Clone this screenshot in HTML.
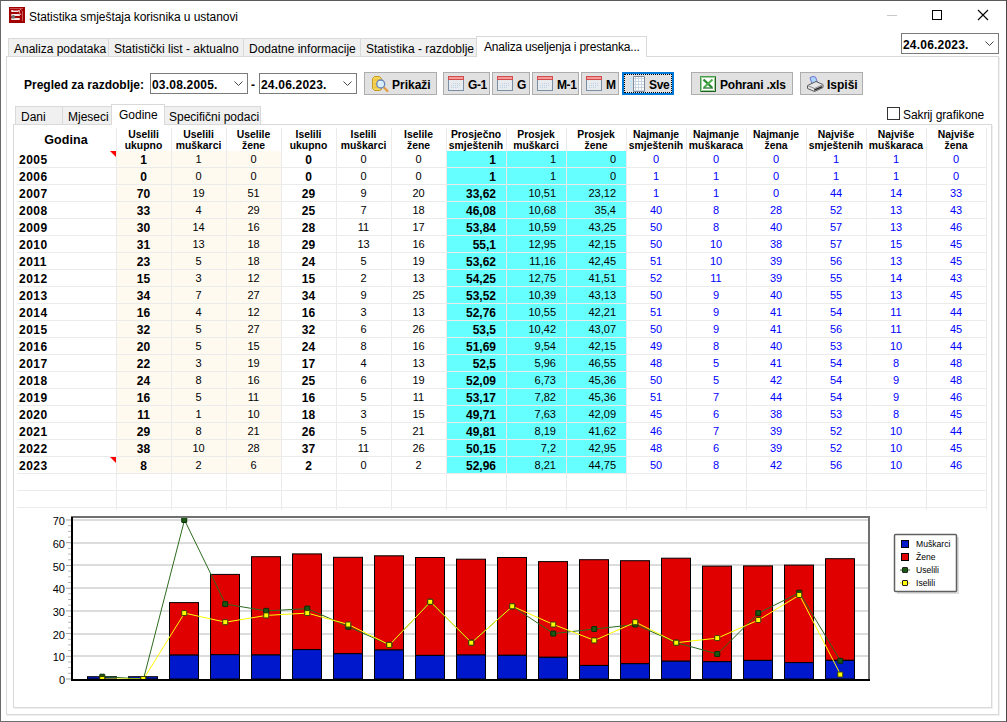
<!DOCTYPE html>
<html><head><meta charset="utf-8">
<style>
*{box-sizing:border-box;margin:0;padding:0}
html,body{width:1007px;height:722px;overflow:hidden;background:#6e6e6e;font-family:"Liberation Sans",sans-serif;color:#000}
.abs{position:absolute}
#win{position:absolute;left:0;top:0;width:1006px;height:721px;background:#fff;border-left:1px solid #6a6a6a;border-top:1px solid #5a5a5a}
#rb{position:absolute;left:1006px;top:0;width:1px;height:722px;background:#4a4646}
.title{position:absolute;left:29px;top:9px;font-size:12px;line-height:16px;white-space:nowrap;letter-spacing:-0.06px}
.tab{position:absolute;height:18px;background:#f0f0f0;border:1px solid #d9d9d9;border-bottom:none;font-size:12px;line-height:16px;white-space:nowrap;padding-left:5px;padding-top:2px}
.tab.act{background:#fff;z-index:2}
.panel{position:absolute;border:1px solid #d9d9d9;background:#fff;box-shadow:1px 1px 0 #f0f0f0}
.combo{position:absolute;width:98px;height:21px;border:1px solid #7a7a7a;background:#fff;font-size:12px;font-weight:bold;line-height:19px;padding-left:1px;padding-top:2px;white-space:nowrap;overflow:hidden;letter-spacing:0.2px}
.chev{position:absolute;right:4px;top:7px;width:9px;height:6px;overflow:visible}
.btn{position:absolute;top:72px;height:23px;background:#e1e1e1;border:1px solid #adadad;font-size:12px;font-weight:bold;line-height:21px;white-space:nowrap}
.btn svg{position:absolute}
.btn span{position:absolute;top:2px}
/* grid */
.bg{position:absolute}
.cr{background:#fffaf0}
.cy{background:#66ffff}
.hl{position:absolute;left:17px;width:969px;height:1px;background:#ebebeb}
.vl{position:absolute;top:128px;height:382px;width:1px;background:#ebebeb}
.hd0{position:absolute;left:16px;top:129px;width:100px;height:22px;text-align:center;font-weight:bold;font-size:12.5px;line-height:22px;letter-spacing:0.1px}
.hd{position:absolute;top:130px;height:22px;text-align:center;font-weight:bold;font-size:10.4px;line-height:10.5px;white-space:nowrap}
.t{position:absolute;height:17px;line-height:18px;white-space:nowrap}
.yr{font-weight:bold;font-size:12px;padding-left:3px;padding-top:1px;letter-spacing:0.5px}
.cb{font-weight:bold;font-size:12px;text-align:center;padding-top:1px}
.cn{font-size:11px;text-align:center}
.rb{font-weight:bold;font-size:12px;text-align:right;padding-right:10px;padding-top:1px}
.rn{font-size:11px;text-align:right;padding-right:10px}
.bl{font-size:11px;text-align:center;color:#0000ff}
.tri{position:absolute;width:0;height:0;border-top:6px solid #ff0000;border-left:6px solid transparent}
.chart{position:absolute;left:0;top:0}
.ax{font-family:"Liberation Sans",sans-serif;font-size:11px;fill:#000}
.lg{font-family:"Liberation Sans",sans-serif;font-size:8.6px;fill:#000}
</style></head><body>
<div id="win"></div>
<div id="rb"></div>

<!-- title bar -->
<svg class="abs" style="left:9px;top:7px" width="16" height="16" viewBox="0 0 16 16">
<rect x="0" y="0" width="16" height="16" fill="#a20000"/>
<rect x="1" y="1" width="13" height="1" fill="#c85050"/>
<rect x="2" y="3" width="9" height="2" rx="1" fill="#f6e6e6"/>
<rect x="2" y="7" width="9" height="2" rx="1" fill="#f6e6e6"/>
<rect x="2" y="11" width="9" height="2" rx="1" fill="#f6e6e6"/>
<path d="M4 3.5 L9 3.5 L10 5" stroke="#d04040" stroke-width="0.8" fill="none"/>
<path d="M11 2 L13 3.5 M13.5 4.5 V14" stroke="#f0c0c0" stroke-width="1" stroke-dasharray="1 1" fill="none"/>
<path d="M10 5 L12 8" stroke="#f0c0c0" stroke-width="0.8"/>
<circle cx="4.2" cy="9.8" r="1.9" fill="#6e6e6e"/>
</svg>
<div class="title">Statistika smještaja korisnika u ustanovi</div>
<div class="abs" style="left:887px;top:15px;width:10px;height:1px;background:#c8c8c8"></div>
<div class="abs" style="left:932px;top:10px;width:10px;height:10px;border:1px solid #000"></div>
<svg class="abs" style="left:977px;top:9px" width="12" height="12" viewBox="0 0 12 12"><path d="M1 1 L11 11 M11 1 L1 11" stroke="#000" stroke-width="1.1"/></svg>

<!-- main tab control -->
<div class="panel" style="left:6px;top:56px;width:993px;height:659px"></div>
<div class="tab" style="left:8px;top:38px;width:101px">Analiza podataka</div>
<div class="tab" style="left:108px;top:38px;width:136px">Statistički list - aktualno</div>
<div class="tab" style="left:243px;top:38px;width:118px">Dodatne informacije</div>
<div class="tab" style="left:360px;top:38px;width:117px">Statistika - razdoblje</div>
<div class="tab act" style="left:476px;top:36px;width:171px;height:21px;padding-left:7px;line-height:16px;padding-top:2px;letter-spacing:-0.2px">Analiza useljenja i prestanka...</div>

<div class="combo" style="left:901px;top:33px">24.06.2023.<svg class="chev" viewBox="0 0 9 6"><path d="M0.5 0.5 L4.5 4.5 L8.5 0.5" stroke="#444" fill="none"/></svg></div>

<!-- toolbar -->
<div class="abs" style="left:24px;top:78px;font-size:12px;font-weight:bold;line-height:14px;white-space:nowrap">Pregled za razdoblje:</div>
<div class="combo" style="left:150px;top:73px">03.08.2005.<svg class="chev" viewBox="0 0 9 6"><path d="M0.5 0.5 L4.5 4.5 L8.5 0.5" stroke="#444" fill="none"/></svg></div>
<div class="abs" style="left:251px;top:78px;font-size:12px;font-weight:bold;line-height:14px">-</div>
<div class="combo" style="left:259px;top:73px;width:98px">24.06.2023.<svg class="chev" viewBox="0 0 9 6"><path d="M0.5 0.5 L4.5 4.5 L8.5 0.5" stroke="#444" fill="none"/></svg></div>

<div class="btn" style="left:364px;width:73px">
<svg style="left:7px;top:3px" width="18" height="17" viewBox="0 0 18 17"><path d="M2.5 0.5 H7.5 L9.5 2.5 V13.5 L7.5 14.5 H2.5 L0.5 12.5 V2.5 Z" fill="#f6d458" stroke="#c29a22"/><path d="M2 4 H8 M2 8 H8 M2 11 H8" stroke="#e8b830"/><path d="M12 11.5 L15.5 15" stroke="#e59a3c" stroke-width="2.2" stroke-linecap="round"/><circle cx="8.7" cy="8" r="4" fill="#d6eefb" stroke="#6a84b8" stroke-width="1.3"/><path d="M6.5 6.5 Q7.5 5.5 9 5.6" stroke="#fff" stroke-width="1" fill="none"/></svg>
<span style="left:27px">Prikaži</span></div>

<div class="btn" style="left:443px;width:47px"><svg style="left:4px;top:3px" width="16" height="15" viewBox="0 0 16 15"><rect x="0.5" y="3.5" width="15" height="11" fill="#e9ecef" stroke="#7a8fa5"/><rect x="0.5" y="0.5" width="15" height="3" fill="#f39a9a" stroke="#d24a4a"/><g fill="#bcd2e4"><rect x="5" y="7" width="1" height="1"/><rect x="7" y="7" width="1" height="1"/><rect x="9" y="7" width="1" height="1"/><rect x="11" y="7" width="1" height="1"/><rect x="3" y="9" width="1" height="1"/><rect x="5" y="9" width="1" height="1"/><rect x="7" y="9" width="1" height="1"/><rect x="9" y="9" width="1" height="1"/><rect x="11" y="9" width="1" height="1"/><rect x="3" y="11" width="1" height="1"/><rect x="5" y="11" width="1" height="1"/><rect x="7" y="11" width="1" height="1"/><rect x="9" y="11" width="1" height="1"/></g></svg><span style="left:24px;letter-spacing:-0.4px">G-1</span></div>
<div class="btn" style="left:492px;width:38px"><svg style="left:4px;top:3px" width="16" height="15" viewBox="0 0 16 15"><rect x="0.5" y="3.5" width="15" height="11" fill="#e9ecef" stroke="#7a8fa5"/><rect x="0.5" y="0.5" width="15" height="3" fill="#f39a9a" stroke="#d24a4a"/><g fill="#bcd2e4"><rect x="5" y="7" width="1" height="1"/><rect x="7" y="7" width="1" height="1"/><rect x="9" y="7" width="1" height="1"/><rect x="11" y="7" width="1" height="1"/><rect x="3" y="9" width="1" height="1"/><rect x="5" y="9" width="1" height="1"/><rect x="7" y="9" width="1" height="1"/><rect x="9" y="9" width="1" height="1"/><rect x="11" y="9" width="1" height="1"/><rect x="3" y="11" width="1" height="1"/><rect x="5" y="11" width="1" height="1"/><rect x="7" y="11" width="1" height="1"/><rect x="9" y="11" width="1" height="1"/></g></svg><span style="left:24px">G</span></div>
<div class="btn" style="left:532px;width:47px"><svg style="left:4px;top:3px" width="16" height="15" viewBox="0 0 16 15"><rect x="0.5" y="3.5" width="15" height="11" fill="#e9ecef" stroke="#7a8fa5"/><rect x="0.5" y="0.5" width="15" height="3" fill="#f39a9a" stroke="#d24a4a"/><g fill="#bcd2e4"><rect x="5" y="7" width="1" height="1"/><rect x="7" y="7" width="1" height="1"/><rect x="9" y="7" width="1" height="1"/><rect x="11" y="7" width="1" height="1"/><rect x="3" y="9" width="1" height="1"/><rect x="5" y="9" width="1" height="1"/><rect x="7" y="9" width="1" height="1"/><rect x="9" y="9" width="1" height="1"/><rect x="11" y="9" width="1" height="1"/><rect x="3" y="11" width="1" height="1"/><rect x="5" y="11" width="1" height="1"/><rect x="7" y="11" width="1" height="1"/><rect x="9" y="11" width="1" height="1"/></g></svg><span style="left:24px;letter-spacing:-0.4px">M-1</span></div>
<div class="btn" style="left:581px;width:38px"><svg style="left:4px;top:3px" width="16" height="15" viewBox="0 0 16 15"><rect x="0.5" y="3.5" width="15" height="11" fill="#e9ecef" stroke="#7a8fa5"/><rect x="0.5" y="0.5" width="15" height="3" fill="#f39a9a" stroke="#d24a4a"/><g fill="#bcd2e4"><rect x="5" y="7" width="1" height="1"/><rect x="7" y="7" width="1" height="1"/><rect x="9" y="7" width="1" height="1"/><rect x="11" y="7" width="1" height="1"/><rect x="3" y="9" width="1" height="1"/><rect x="5" y="9" width="1" height="1"/><rect x="7" y="9" width="1" height="1"/><rect x="9" y="9" width="1" height="1"/><rect x="11" y="9" width="1" height="1"/><rect x="3" y="11" width="1" height="1"/><rect x="5" y="11" width="1" height="1"/><rect x="7" y="11" width="1" height="1"/><rect x="9" y="11" width="1" height="1"/></g></svg><span style="left:24px">M</span></div>
<div class="btn" style="left:622px;width:52px;border:2px solid #0078d7">
<div class="abs" style="left:0px;top:0px;width:48px;height:19px;border:1px dotted #000"></div>
<svg style="left:6px;top:2px" width="16" height="16" viewBox="0 0 16 16"><rect x="3" y="0" width="12" height="16" fill="#ffffff"/><g fill="#c9d5e1"><rect x="5" y="0" width="1" height="16"/><rect x="8" y="0" width="1" height="16"/><rect x="11" y="0" width="1" height="16"/><rect x="3" y="2" width="12" height="1"/><rect x="3" y="5" width="12" height="1"/><rect x="3" y="8" width="12" height="1"/><rect x="3" y="11" width="12" height="1"/><rect x="3" y="14" width="12" height="1"/></g><path d="M3.5 15.5 V0.5 H14.5 V15.5 H3.5" stroke="#7d8d9d" fill="none"/><g fill="#bfe6fa"><rect x="0" y="1" width="2" height="2"/><rect x="0" y="4" width="2" height="2"/><rect x="0" y="7" width="2" height="2"/><rect x="0" y="10" width="2" height="2"/><rect x="0" y="13" width="2" height="2"/></g></svg>
<span style="left:25px;top:1px;letter-spacing:-0.3px">Sve</span></div>

<div class="btn" style="left:691px;width:102px">
<svg style="left:8px;top:3px" width="16" height="16" viewBox="0 0 16 16"><rect x="0.5" y="0.5" width="15" height="15" fill="#ffffff" stroke="#4a9a4a"/><path d="M15.5 1 V15.5 H1" stroke="#1e5e1e" fill="none"/><path d="M1.5 1.5 H14.5 V14.5 H1.5 Z" stroke="#9ccf9c" fill="none"/><path d="M3.5 3.5 L12 11.5" stroke="#2a8a34" stroke-width="2.4"/><path d="M12.5 3.5 L4 11.5" stroke="#4cae4c" stroke-width="2"/><path d="M3 12 H13" stroke="#1e6e28" stroke-width="1.2"/></svg>
<span style="left:28px;letter-spacing:-0.2px">Pohrani .xls</span></div>
<div class="btn" style="left:800px;width:63px">
<svg style="left:6px;top:3px" width="17" height="17" viewBox="0 0 17 17"><path d="M3 1.5 L6 0.5 L8.5 1 L10.5 6.5 L5 8 Z" fill="#a9d6fa" stroke="#7272d2"/><path d="M0.5 9.5 L9 5.5 L16 8.5 L16 11.5 L7.5 15.5 L0.5 12.5 Z" fill="#e6e6e6" stroke="#5a5a5a"/><path d="M0.5 9.5 L7.5 12.5 L16 8.5" stroke="#8a8a8a" fill="none"/><path d="M7.5 12.5 V15.5" stroke="#6a6a6a"/><path d="M8 13 L15 10 L15 11.5 L8 14.5 Z" fill="#202020"/></svg>
<span style="left:26px">Ispiši</span></div>

<!-- inner tab control -->
<div class="panel" style="left:13px;top:124px;width:979px;height:584px"></div>
<div class="tab" style="left:15px;top:106px;width:48px;line-height:17px">Dani</div>
<div class="tab" style="left:62px;top:106px;width:50px;line-height:17px">Mjeseci</div>
<div class="tab act" style="left:111px;top:104px;width:54px;height:21px;padding-left:7px;line-height:16px;padding-top:2px">Godine</div>
<div class="tab" style="left:164px;top:106px;width:97px;line-height:17px;padding-left:4px">Specifični podaci</div>

<div class="abs" style="left:887px;top:107px;width:13px;height:13px;border:1px solid #333;background:#fff"></div>
<div class="abs" style="left:903px;top:108px;font-size:12px;line-height:15px;white-space:nowrap;letter-spacing:-0.1px">Sakrij grafikone</div>

<!-- grid -->
<div class="bg cr" style="left:117px;top:151px;width:54px;height:16px"></div>
<div class="bg cr" style="left:172px;top:151px;width:54px;height:16px"></div>
<div class="bg cr" style="left:227px;top:151px;width:54px;height:16px"></div>
<div class="bg cy" style="left:447px;top:151px;width:59px;height:16px"></div>
<div class="bg cy" style="left:507px;top:151px;width:59px;height:16px"></div>
<div class="bg cy" style="left:567px;top:151px;width:59px;height:16px"></div>
<div class="bg cr" style="left:117px;top:168px;width:54px;height:16px"></div>
<div class="bg cr" style="left:172px;top:168px;width:54px;height:16px"></div>
<div class="bg cr" style="left:227px;top:168px;width:54px;height:16px"></div>
<div class="bg cy" style="left:447px;top:168px;width:59px;height:16px"></div>
<div class="bg cy" style="left:507px;top:168px;width:59px;height:16px"></div>
<div class="bg cy" style="left:567px;top:168px;width:59px;height:16px"></div>
<div class="bg cr" style="left:117px;top:185px;width:54px;height:16px"></div>
<div class="bg cr" style="left:172px;top:185px;width:54px;height:16px"></div>
<div class="bg cr" style="left:227px;top:185px;width:54px;height:16px"></div>
<div class="bg cy" style="left:447px;top:185px;width:59px;height:16px"></div>
<div class="bg cy" style="left:507px;top:185px;width:59px;height:16px"></div>
<div class="bg cy" style="left:567px;top:185px;width:59px;height:16px"></div>
<div class="bg cr" style="left:117px;top:202px;width:54px;height:16px"></div>
<div class="bg cr" style="left:172px;top:202px;width:54px;height:16px"></div>
<div class="bg cr" style="left:227px;top:202px;width:54px;height:16px"></div>
<div class="bg cy" style="left:447px;top:202px;width:59px;height:16px"></div>
<div class="bg cy" style="left:507px;top:202px;width:59px;height:16px"></div>
<div class="bg cy" style="left:567px;top:202px;width:59px;height:16px"></div>
<div class="bg cr" style="left:117px;top:219px;width:54px;height:16px"></div>
<div class="bg cr" style="left:172px;top:219px;width:54px;height:16px"></div>
<div class="bg cr" style="left:227px;top:219px;width:54px;height:16px"></div>
<div class="bg cy" style="left:447px;top:219px;width:59px;height:16px"></div>
<div class="bg cy" style="left:507px;top:219px;width:59px;height:16px"></div>
<div class="bg cy" style="left:567px;top:219px;width:59px;height:16px"></div>
<div class="bg cr" style="left:117px;top:236px;width:54px;height:16px"></div>
<div class="bg cr" style="left:172px;top:236px;width:54px;height:16px"></div>
<div class="bg cr" style="left:227px;top:236px;width:54px;height:16px"></div>
<div class="bg cy" style="left:447px;top:236px;width:59px;height:16px"></div>
<div class="bg cy" style="left:507px;top:236px;width:59px;height:16px"></div>
<div class="bg cy" style="left:567px;top:236px;width:59px;height:16px"></div>
<div class="bg cr" style="left:117px;top:253px;width:54px;height:16px"></div>
<div class="bg cr" style="left:172px;top:253px;width:54px;height:16px"></div>
<div class="bg cr" style="left:227px;top:253px;width:54px;height:16px"></div>
<div class="bg cy" style="left:447px;top:253px;width:59px;height:16px"></div>
<div class="bg cy" style="left:507px;top:253px;width:59px;height:16px"></div>
<div class="bg cy" style="left:567px;top:253px;width:59px;height:16px"></div>
<div class="bg cr" style="left:117px;top:270px;width:54px;height:16px"></div>
<div class="bg cr" style="left:172px;top:270px;width:54px;height:16px"></div>
<div class="bg cr" style="left:227px;top:270px;width:54px;height:16px"></div>
<div class="bg cy" style="left:447px;top:270px;width:59px;height:16px"></div>
<div class="bg cy" style="left:507px;top:270px;width:59px;height:16px"></div>
<div class="bg cy" style="left:567px;top:270px;width:59px;height:16px"></div>
<div class="bg cr" style="left:117px;top:287px;width:54px;height:16px"></div>
<div class="bg cr" style="left:172px;top:287px;width:54px;height:16px"></div>
<div class="bg cr" style="left:227px;top:287px;width:54px;height:16px"></div>
<div class="bg cy" style="left:447px;top:287px;width:59px;height:16px"></div>
<div class="bg cy" style="left:507px;top:287px;width:59px;height:16px"></div>
<div class="bg cy" style="left:567px;top:287px;width:59px;height:16px"></div>
<div class="bg cr" style="left:117px;top:304px;width:54px;height:16px"></div>
<div class="bg cr" style="left:172px;top:304px;width:54px;height:16px"></div>
<div class="bg cr" style="left:227px;top:304px;width:54px;height:16px"></div>
<div class="bg cy" style="left:447px;top:304px;width:59px;height:16px"></div>
<div class="bg cy" style="left:507px;top:304px;width:59px;height:16px"></div>
<div class="bg cy" style="left:567px;top:304px;width:59px;height:16px"></div>
<div class="bg cr" style="left:117px;top:321px;width:54px;height:16px"></div>
<div class="bg cr" style="left:172px;top:321px;width:54px;height:16px"></div>
<div class="bg cr" style="left:227px;top:321px;width:54px;height:16px"></div>
<div class="bg cy" style="left:447px;top:321px;width:59px;height:16px"></div>
<div class="bg cy" style="left:507px;top:321px;width:59px;height:16px"></div>
<div class="bg cy" style="left:567px;top:321px;width:59px;height:16px"></div>
<div class="bg cr" style="left:117px;top:338px;width:54px;height:16px"></div>
<div class="bg cr" style="left:172px;top:338px;width:54px;height:16px"></div>
<div class="bg cr" style="left:227px;top:338px;width:54px;height:16px"></div>
<div class="bg cy" style="left:447px;top:338px;width:59px;height:16px"></div>
<div class="bg cy" style="left:507px;top:338px;width:59px;height:16px"></div>
<div class="bg cy" style="left:567px;top:338px;width:59px;height:16px"></div>
<div class="bg cr" style="left:117px;top:355px;width:54px;height:16px"></div>
<div class="bg cr" style="left:172px;top:355px;width:54px;height:16px"></div>
<div class="bg cr" style="left:227px;top:355px;width:54px;height:16px"></div>
<div class="bg cy" style="left:447px;top:355px;width:59px;height:16px"></div>
<div class="bg cy" style="left:507px;top:355px;width:59px;height:16px"></div>
<div class="bg cy" style="left:567px;top:355px;width:59px;height:16px"></div>
<div class="bg cr" style="left:117px;top:372px;width:54px;height:16px"></div>
<div class="bg cr" style="left:172px;top:372px;width:54px;height:16px"></div>
<div class="bg cr" style="left:227px;top:372px;width:54px;height:16px"></div>
<div class="bg cy" style="left:447px;top:372px;width:59px;height:16px"></div>
<div class="bg cy" style="left:507px;top:372px;width:59px;height:16px"></div>
<div class="bg cy" style="left:567px;top:372px;width:59px;height:16px"></div>
<div class="bg cr" style="left:117px;top:389px;width:54px;height:16px"></div>
<div class="bg cr" style="left:172px;top:389px;width:54px;height:16px"></div>
<div class="bg cr" style="left:227px;top:389px;width:54px;height:16px"></div>
<div class="bg cy" style="left:447px;top:389px;width:59px;height:16px"></div>
<div class="bg cy" style="left:507px;top:389px;width:59px;height:16px"></div>
<div class="bg cy" style="left:567px;top:389px;width:59px;height:16px"></div>
<div class="bg cr" style="left:117px;top:406px;width:54px;height:16px"></div>
<div class="bg cr" style="left:172px;top:406px;width:54px;height:16px"></div>
<div class="bg cr" style="left:227px;top:406px;width:54px;height:16px"></div>
<div class="bg cy" style="left:447px;top:406px;width:59px;height:16px"></div>
<div class="bg cy" style="left:507px;top:406px;width:59px;height:16px"></div>
<div class="bg cy" style="left:567px;top:406px;width:59px;height:16px"></div>
<div class="bg cr" style="left:117px;top:423px;width:54px;height:16px"></div>
<div class="bg cr" style="left:172px;top:423px;width:54px;height:16px"></div>
<div class="bg cr" style="left:227px;top:423px;width:54px;height:16px"></div>
<div class="bg cy" style="left:447px;top:423px;width:59px;height:16px"></div>
<div class="bg cy" style="left:507px;top:423px;width:59px;height:16px"></div>
<div class="bg cy" style="left:567px;top:423px;width:59px;height:16px"></div>
<div class="bg cr" style="left:117px;top:440px;width:54px;height:16px"></div>
<div class="bg cr" style="left:172px;top:440px;width:54px;height:16px"></div>
<div class="bg cr" style="left:227px;top:440px;width:54px;height:16px"></div>
<div class="bg cy" style="left:447px;top:440px;width:59px;height:16px"></div>
<div class="bg cy" style="left:507px;top:440px;width:59px;height:16px"></div>
<div class="bg cy" style="left:567px;top:440px;width:59px;height:16px"></div>
<div class="bg cr" style="left:117px;top:457px;width:54px;height:16px"></div>
<div class="bg cr" style="left:172px;top:457px;width:54px;height:16px"></div>
<div class="bg cr" style="left:227px;top:457px;width:54px;height:16px"></div>
<div class="bg cy" style="left:447px;top:457px;width:59px;height:16px"></div>
<div class="bg cy" style="left:507px;top:457px;width:59px;height:16px"></div>
<div class="bg cy" style="left:567px;top:457px;width:59px;height:16px"></div>
<div class="hl" style="top:167px"></div>
<div class="hl" style="top:184px"></div>
<div class="hl" style="top:201px"></div>
<div class="hl" style="top:218px"></div>
<div class="hl" style="top:235px"></div>
<div class="hl" style="top:252px"></div>
<div class="hl" style="top:269px"></div>
<div class="hl" style="top:286px"></div>
<div class="hl" style="top:303px"></div>
<div class="hl" style="top:320px"></div>
<div class="hl" style="top:337px"></div>
<div class="hl" style="top:354px"></div>
<div class="hl" style="top:371px"></div>
<div class="hl" style="top:388px"></div>
<div class="hl" style="top:405px"></div>
<div class="hl" style="top:422px"></div>
<div class="hl" style="top:439px"></div>
<div class="hl" style="top:456px"></div>
<div class="hl" style="top:473px"></div>
<div class="hl" style="top:490px"></div>
<div class="hl" style="top:507px"></div>
<div class="vl" style="left:116px"></div>
<div class="vl" style="left:171px"></div>
<div class="vl" style="left:226px"></div>
<div class="vl" style="left:281px"></div>
<div class="vl" style="left:336px"></div>
<div class="vl" style="left:391px"></div>
<div class="vl" style="left:446px"></div>
<div class="vl" style="left:506px"></div>
<div class="vl" style="left:566px"></div>
<div class="vl" style="left:626px"></div>
<div class="vl" style="left:686px"></div>
<div class="vl" style="left:746px"></div>
<div class="vl" style="left:806px"></div>
<div class="vl" style="left:866px"></div>
<div class="vl" style="left:926px"></div>
<div class="vl" style="left:986px"></div>
<div class="hd0">Godina</div>
<div class="hd" style="left:116px;width:55px">Uselili<br>ukupno</div>
<div class="hd" style="left:171px;width:55px">Uselili<br>muškarci</div>
<div class="hd" style="left:226px;width:55px">Uselile<br>žene</div>
<div class="hd" style="left:281px;width:55px">Iselili<br>ukupno</div>
<div class="hd" style="left:336px;width:55px">Iselili<br>muškarci</div>
<div class="hd" style="left:391px;width:55px">Iselile<br>žene</div>
<div class="hd" style="left:446px;width:60px">Prosječno<br>smještenih</div>
<div class="hd" style="left:506px;width:60px">Prosjek<br>muškarci</div>
<div class="hd" style="left:566px;width:60px">Prosjek<br>žene</div>
<div class="hd" style="left:626px;width:60px">Najmanje<br>smještenih</div>
<div class="hd" style="left:686px;width:60px">Najmanje<br>muškaraca</div>
<div class="hd" style="left:746px;width:60px">Najmanje<br>žena</div>
<div class="hd" style="left:806px;width:60px">Najviše<br>smještenih</div>
<div class="hd" style="left:866px;width:60px">Najviše<br>muškaraca</div>
<div class="hd" style="left:926px;width:60px">Najviše<br>žena</div>
<div class="t yr" style="left:16px;top:150px;width:100px">2005</div>
<div class="t cb" style="left:116px;top:150px;width:55px">1</div>
<div class="t cn" style="left:171px;top:150px;width:55px">1</div>
<div class="t cn" style="left:226px;top:150px;width:55px">0</div>
<div class="t cb" style="left:281px;top:150px;width:55px">0</div>
<div class="t cn" style="left:336px;top:150px;width:55px">0</div>
<div class="t cn" style="left:391px;top:150px;width:55px">0</div>
<div class="t rb" style="left:446px;top:150px;width:60px">1</div>
<div class="t rn" style="left:506px;top:150px;width:60px">1</div>
<div class="t rn" style="left:566px;top:150px;width:60px">0</div>
<div class="t bl" style="left:626px;top:150px;width:60px">0</div>
<div class="t bl" style="left:686px;top:150px;width:60px">0</div>
<div class="t bl" style="left:746px;top:150px;width:60px">0</div>
<div class="t bl" style="left:806px;top:150px;width:60px">1</div>
<div class="t bl" style="left:866px;top:150px;width:60px">1</div>
<div class="t bl" style="left:926px;top:150px;width:60px">0</div>
<div class="t yr" style="left:16px;top:167px;width:100px">2006</div>
<div class="t cb" style="left:116px;top:167px;width:55px">0</div>
<div class="t cn" style="left:171px;top:167px;width:55px">0</div>
<div class="t cn" style="left:226px;top:167px;width:55px">0</div>
<div class="t cb" style="left:281px;top:167px;width:55px">0</div>
<div class="t cn" style="left:336px;top:167px;width:55px">0</div>
<div class="t cn" style="left:391px;top:167px;width:55px">0</div>
<div class="t rb" style="left:446px;top:167px;width:60px">1</div>
<div class="t rn" style="left:506px;top:167px;width:60px">1</div>
<div class="t rn" style="left:566px;top:167px;width:60px">0</div>
<div class="t bl" style="left:626px;top:167px;width:60px">1</div>
<div class="t bl" style="left:686px;top:167px;width:60px">1</div>
<div class="t bl" style="left:746px;top:167px;width:60px">0</div>
<div class="t bl" style="left:806px;top:167px;width:60px">1</div>
<div class="t bl" style="left:866px;top:167px;width:60px">1</div>
<div class="t bl" style="left:926px;top:167px;width:60px">0</div>
<div class="t yr" style="left:16px;top:184px;width:100px">2007</div>
<div class="t cb" style="left:116px;top:184px;width:55px">70</div>
<div class="t cn" style="left:171px;top:184px;width:55px">19</div>
<div class="t cn" style="left:226px;top:184px;width:55px">51</div>
<div class="t cb" style="left:281px;top:184px;width:55px">29</div>
<div class="t cn" style="left:336px;top:184px;width:55px">9</div>
<div class="t cn" style="left:391px;top:184px;width:55px">20</div>
<div class="t rb" style="left:446px;top:184px;width:60px">33,62</div>
<div class="t rn" style="left:506px;top:184px;width:60px">10,51</div>
<div class="t rn" style="left:566px;top:184px;width:60px">23,12</div>
<div class="t bl" style="left:626px;top:184px;width:60px">1</div>
<div class="t bl" style="left:686px;top:184px;width:60px">1</div>
<div class="t bl" style="left:746px;top:184px;width:60px">0</div>
<div class="t bl" style="left:806px;top:184px;width:60px">44</div>
<div class="t bl" style="left:866px;top:184px;width:60px">14</div>
<div class="t bl" style="left:926px;top:184px;width:60px">33</div>
<div class="t yr" style="left:16px;top:201px;width:100px">2008</div>
<div class="t cb" style="left:116px;top:201px;width:55px">33</div>
<div class="t cn" style="left:171px;top:201px;width:55px">4</div>
<div class="t cn" style="left:226px;top:201px;width:55px">29</div>
<div class="t cb" style="left:281px;top:201px;width:55px">25</div>
<div class="t cn" style="left:336px;top:201px;width:55px">7</div>
<div class="t cn" style="left:391px;top:201px;width:55px">18</div>
<div class="t rb" style="left:446px;top:201px;width:60px">46,08</div>
<div class="t rn" style="left:506px;top:201px;width:60px">10,68</div>
<div class="t rn" style="left:566px;top:201px;width:60px">35,4</div>
<div class="t bl" style="left:626px;top:201px;width:60px">40</div>
<div class="t bl" style="left:686px;top:201px;width:60px">8</div>
<div class="t bl" style="left:746px;top:201px;width:60px">28</div>
<div class="t bl" style="left:806px;top:201px;width:60px">52</div>
<div class="t bl" style="left:866px;top:201px;width:60px">13</div>
<div class="t bl" style="left:926px;top:201px;width:60px">43</div>
<div class="t yr" style="left:16px;top:218px;width:100px">2009</div>
<div class="t cb" style="left:116px;top:218px;width:55px">30</div>
<div class="t cn" style="left:171px;top:218px;width:55px">14</div>
<div class="t cn" style="left:226px;top:218px;width:55px">16</div>
<div class="t cb" style="left:281px;top:218px;width:55px">28</div>
<div class="t cn" style="left:336px;top:218px;width:55px">11</div>
<div class="t cn" style="left:391px;top:218px;width:55px">17</div>
<div class="t rb" style="left:446px;top:218px;width:60px">53,84</div>
<div class="t rn" style="left:506px;top:218px;width:60px">10,59</div>
<div class="t rn" style="left:566px;top:218px;width:60px">43,25</div>
<div class="t bl" style="left:626px;top:218px;width:60px">50</div>
<div class="t bl" style="left:686px;top:218px;width:60px">8</div>
<div class="t bl" style="left:746px;top:218px;width:60px">40</div>
<div class="t bl" style="left:806px;top:218px;width:60px">57</div>
<div class="t bl" style="left:866px;top:218px;width:60px">13</div>
<div class="t bl" style="left:926px;top:218px;width:60px">46</div>
<div class="t yr" style="left:16px;top:235px;width:100px">2010</div>
<div class="t cb" style="left:116px;top:235px;width:55px">31</div>
<div class="t cn" style="left:171px;top:235px;width:55px">13</div>
<div class="t cn" style="left:226px;top:235px;width:55px">18</div>
<div class="t cb" style="left:281px;top:235px;width:55px">29</div>
<div class="t cn" style="left:336px;top:235px;width:55px">13</div>
<div class="t cn" style="left:391px;top:235px;width:55px">16</div>
<div class="t rb" style="left:446px;top:235px;width:60px">55,1</div>
<div class="t rn" style="left:506px;top:235px;width:60px">12,95</div>
<div class="t rn" style="left:566px;top:235px;width:60px">42,15</div>
<div class="t bl" style="left:626px;top:235px;width:60px">50</div>
<div class="t bl" style="left:686px;top:235px;width:60px">10</div>
<div class="t bl" style="left:746px;top:235px;width:60px">38</div>
<div class="t bl" style="left:806px;top:235px;width:60px">57</div>
<div class="t bl" style="left:866px;top:235px;width:60px">15</div>
<div class="t bl" style="left:926px;top:235px;width:60px">45</div>
<div class="t yr" style="left:16px;top:252px;width:100px">2011</div>
<div class="t cb" style="left:116px;top:252px;width:55px">23</div>
<div class="t cn" style="left:171px;top:252px;width:55px">5</div>
<div class="t cn" style="left:226px;top:252px;width:55px">18</div>
<div class="t cb" style="left:281px;top:252px;width:55px">24</div>
<div class="t cn" style="left:336px;top:252px;width:55px">5</div>
<div class="t cn" style="left:391px;top:252px;width:55px">19</div>
<div class="t rb" style="left:446px;top:252px;width:60px">53,62</div>
<div class="t rn" style="left:506px;top:252px;width:60px">11,16</div>
<div class="t rn" style="left:566px;top:252px;width:60px">42,45</div>
<div class="t bl" style="left:626px;top:252px;width:60px">51</div>
<div class="t bl" style="left:686px;top:252px;width:60px">10</div>
<div class="t bl" style="left:746px;top:252px;width:60px">39</div>
<div class="t bl" style="left:806px;top:252px;width:60px">56</div>
<div class="t bl" style="left:866px;top:252px;width:60px">13</div>
<div class="t bl" style="left:926px;top:252px;width:60px">45</div>
<div class="t yr" style="left:16px;top:269px;width:100px">2012</div>
<div class="t cb" style="left:116px;top:269px;width:55px">15</div>
<div class="t cn" style="left:171px;top:269px;width:55px">3</div>
<div class="t cn" style="left:226px;top:269px;width:55px">12</div>
<div class="t cb" style="left:281px;top:269px;width:55px">15</div>
<div class="t cn" style="left:336px;top:269px;width:55px">2</div>
<div class="t cn" style="left:391px;top:269px;width:55px">13</div>
<div class="t rb" style="left:446px;top:269px;width:60px">54,25</div>
<div class="t rn" style="left:506px;top:269px;width:60px">12,75</div>
<div class="t rn" style="left:566px;top:269px;width:60px">41,51</div>
<div class="t bl" style="left:626px;top:269px;width:60px">52</div>
<div class="t bl" style="left:686px;top:269px;width:60px">11</div>
<div class="t bl" style="left:746px;top:269px;width:60px">39</div>
<div class="t bl" style="left:806px;top:269px;width:60px">55</div>
<div class="t bl" style="left:866px;top:269px;width:60px">14</div>
<div class="t bl" style="left:926px;top:269px;width:60px">43</div>
<div class="t yr" style="left:16px;top:286px;width:100px">2013</div>
<div class="t cb" style="left:116px;top:286px;width:55px">34</div>
<div class="t cn" style="left:171px;top:286px;width:55px">7</div>
<div class="t cn" style="left:226px;top:286px;width:55px">27</div>
<div class="t cb" style="left:281px;top:286px;width:55px">34</div>
<div class="t cn" style="left:336px;top:286px;width:55px">9</div>
<div class="t cn" style="left:391px;top:286px;width:55px">25</div>
<div class="t rb" style="left:446px;top:286px;width:60px">53,52</div>
<div class="t rn" style="left:506px;top:286px;width:60px">10,39</div>
<div class="t rn" style="left:566px;top:286px;width:60px">43,13</div>
<div class="t bl" style="left:626px;top:286px;width:60px">50</div>
<div class="t bl" style="left:686px;top:286px;width:60px">9</div>
<div class="t bl" style="left:746px;top:286px;width:60px">40</div>
<div class="t bl" style="left:806px;top:286px;width:60px">55</div>
<div class="t bl" style="left:866px;top:286px;width:60px">13</div>
<div class="t bl" style="left:926px;top:286px;width:60px">45</div>
<div class="t yr" style="left:16px;top:303px;width:100px">2014</div>
<div class="t cb" style="left:116px;top:303px;width:55px">16</div>
<div class="t cn" style="left:171px;top:303px;width:55px">4</div>
<div class="t cn" style="left:226px;top:303px;width:55px">12</div>
<div class="t cb" style="left:281px;top:303px;width:55px">16</div>
<div class="t cn" style="left:336px;top:303px;width:55px">3</div>
<div class="t cn" style="left:391px;top:303px;width:55px">13</div>
<div class="t rb" style="left:446px;top:303px;width:60px">52,76</div>
<div class="t rn" style="left:506px;top:303px;width:60px">10,55</div>
<div class="t rn" style="left:566px;top:303px;width:60px">42,21</div>
<div class="t bl" style="left:626px;top:303px;width:60px">51</div>
<div class="t bl" style="left:686px;top:303px;width:60px">9</div>
<div class="t bl" style="left:746px;top:303px;width:60px">41</div>
<div class="t bl" style="left:806px;top:303px;width:60px">54</div>
<div class="t bl" style="left:866px;top:303px;width:60px">11</div>
<div class="t bl" style="left:926px;top:303px;width:60px">44</div>
<div class="t yr" style="left:16px;top:320px;width:100px">2015</div>
<div class="t cb" style="left:116px;top:320px;width:55px">32</div>
<div class="t cn" style="left:171px;top:320px;width:55px">5</div>
<div class="t cn" style="left:226px;top:320px;width:55px">27</div>
<div class="t cb" style="left:281px;top:320px;width:55px">32</div>
<div class="t cn" style="left:336px;top:320px;width:55px">6</div>
<div class="t cn" style="left:391px;top:320px;width:55px">26</div>
<div class="t rb" style="left:446px;top:320px;width:60px">53,5</div>
<div class="t rn" style="left:506px;top:320px;width:60px">10,42</div>
<div class="t rn" style="left:566px;top:320px;width:60px">43,07</div>
<div class="t bl" style="left:626px;top:320px;width:60px">50</div>
<div class="t bl" style="left:686px;top:320px;width:60px">9</div>
<div class="t bl" style="left:746px;top:320px;width:60px">41</div>
<div class="t bl" style="left:806px;top:320px;width:60px">56</div>
<div class="t bl" style="left:866px;top:320px;width:60px">11</div>
<div class="t bl" style="left:926px;top:320px;width:60px">45</div>
<div class="t yr" style="left:16px;top:337px;width:100px">2016</div>
<div class="t cb" style="left:116px;top:337px;width:55px">20</div>
<div class="t cn" style="left:171px;top:337px;width:55px">5</div>
<div class="t cn" style="left:226px;top:337px;width:55px">15</div>
<div class="t cb" style="left:281px;top:337px;width:55px">24</div>
<div class="t cn" style="left:336px;top:337px;width:55px">8</div>
<div class="t cn" style="left:391px;top:337px;width:55px">16</div>
<div class="t rb" style="left:446px;top:337px;width:60px">51,69</div>
<div class="t rn" style="left:506px;top:337px;width:60px">9,54</div>
<div class="t rn" style="left:566px;top:337px;width:60px">42,15</div>
<div class="t bl" style="left:626px;top:337px;width:60px">49</div>
<div class="t bl" style="left:686px;top:337px;width:60px">8</div>
<div class="t bl" style="left:746px;top:337px;width:60px">40</div>
<div class="t bl" style="left:806px;top:337px;width:60px">53</div>
<div class="t bl" style="left:866px;top:337px;width:60px">10</div>
<div class="t bl" style="left:926px;top:337px;width:60px">44</div>
<div class="t yr" style="left:16px;top:354px;width:100px">2017</div>
<div class="t cb" style="left:116px;top:354px;width:55px">22</div>
<div class="t cn" style="left:171px;top:354px;width:55px">3</div>
<div class="t cn" style="left:226px;top:354px;width:55px">19</div>
<div class="t cb" style="left:281px;top:354px;width:55px">17</div>
<div class="t cn" style="left:336px;top:354px;width:55px">4</div>
<div class="t cn" style="left:391px;top:354px;width:55px">13</div>
<div class="t rb" style="left:446px;top:354px;width:60px">52,5</div>
<div class="t rn" style="left:506px;top:354px;width:60px">5,96</div>
<div class="t rn" style="left:566px;top:354px;width:60px">46,55</div>
<div class="t bl" style="left:626px;top:354px;width:60px">48</div>
<div class="t bl" style="left:686px;top:354px;width:60px">5</div>
<div class="t bl" style="left:746px;top:354px;width:60px">41</div>
<div class="t bl" style="left:806px;top:354px;width:60px">54</div>
<div class="t bl" style="left:866px;top:354px;width:60px">8</div>
<div class="t bl" style="left:926px;top:354px;width:60px">48</div>
<div class="t yr" style="left:16px;top:371px;width:100px">2018</div>
<div class="t cb" style="left:116px;top:371px;width:55px">24</div>
<div class="t cn" style="left:171px;top:371px;width:55px">8</div>
<div class="t cn" style="left:226px;top:371px;width:55px">16</div>
<div class="t cb" style="left:281px;top:371px;width:55px">25</div>
<div class="t cn" style="left:336px;top:371px;width:55px">6</div>
<div class="t cn" style="left:391px;top:371px;width:55px">19</div>
<div class="t rb" style="left:446px;top:371px;width:60px">52,09</div>
<div class="t rn" style="left:506px;top:371px;width:60px">6,73</div>
<div class="t rn" style="left:566px;top:371px;width:60px">45,36</div>
<div class="t bl" style="left:626px;top:371px;width:60px">50</div>
<div class="t bl" style="left:686px;top:371px;width:60px">5</div>
<div class="t bl" style="left:746px;top:371px;width:60px">42</div>
<div class="t bl" style="left:806px;top:371px;width:60px">54</div>
<div class="t bl" style="left:866px;top:371px;width:60px">9</div>
<div class="t bl" style="left:926px;top:371px;width:60px">48</div>
<div class="t yr" style="left:16px;top:388px;width:100px">2019</div>
<div class="t cb" style="left:116px;top:388px;width:55px">16</div>
<div class="t cn" style="left:171px;top:388px;width:55px">5</div>
<div class="t cn" style="left:226px;top:388px;width:55px">11</div>
<div class="t cb" style="left:281px;top:388px;width:55px">16</div>
<div class="t cn" style="left:336px;top:388px;width:55px">5</div>
<div class="t cn" style="left:391px;top:388px;width:55px">11</div>
<div class="t rb" style="left:446px;top:388px;width:60px">53,17</div>
<div class="t rn" style="left:506px;top:388px;width:60px">7,82</div>
<div class="t rn" style="left:566px;top:388px;width:60px">45,36</div>
<div class="t bl" style="left:626px;top:388px;width:60px">51</div>
<div class="t bl" style="left:686px;top:388px;width:60px">7</div>
<div class="t bl" style="left:746px;top:388px;width:60px">44</div>
<div class="t bl" style="left:806px;top:388px;width:60px">54</div>
<div class="t bl" style="left:866px;top:388px;width:60px">9</div>
<div class="t bl" style="left:926px;top:388px;width:60px">46</div>
<div class="t yr" style="left:16px;top:405px;width:100px">2020</div>
<div class="t cb" style="left:116px;top:405px;width:55px">11</div>
<div class="t cn" style="left:171px;top:405px;width:55px">1</div>
<div class="t cn" style="left:226px;top:405px;width:55px">10</div>
<div class="t cb" style="left:281px;top:405px;width:55px">18</div>
<div class="t cn" style="left:336px;top:405px;width:55px">3</div>
<div class="t cn" style="left:391px;top:405px;width:55px">15</div>
<div class="t rb" style="left:446px;top:405px;width:60px">49,71</div>
<div class="t rn" style="left:506px;top:405px;width:60px">7,63</div>
<div class="t rn" style="left:566px;top:405px;width:60px">42,09</div>
<div class="t bl" style="left:626px;top:405px;width:60px">45</div>
<div class="t bl" style="left:686px;top:405px;width:60px">6</div>
<div class="t bl" style="left:746px;top:405px;width:60px">38</div>
<div class="t bl" style="left:806px;top:405px;width:60px">53</div>
<div class="t bl" style="left:866px;top:405px;width:60px">8</div>
<div class="t bl" style="left:926px;top:405px;width:60px">45</div>
<div class="t yr" style="left:16px;top:422px;width:100px">2021</div>
<div class="t cb" style="left:116px;top:422px;width:55px">29</div>
<div class="t cn" style="left:171px;top:422px;width:55px">8</div>
<div class="t cn" style="left:226px;top:422px;width:55px">21</div>
<div class="t cb" style="left:281px;top:422px;width:55px">26</div>
<div class="t cn" style="left:336px;top:422px;width:55px">5</div>
<div class="t cn" style="left:391px;top:422px;width:55px">21</div>
<div class="t rb" style="left:446px;top:422px;width:60px">49,81</div>
<div class="t rn" style="left:506px;top:422px;width:60px">8,19</div>
<div class="t rn" style="left:566px;top:422px;width:60px">41,62</div>
<div class="t bl" style="left:626px;top:422px;width:60px">46</div>
<div class="t bl" style="left:686px;top:422px;width:60px">7</div>
<div class="t bl" style="left:746px;top:422px;width:60px">39</div>
<div class="t bl" style="left:806px;top:422px;width:60px">52</div>
<div class="t bl" style="left:866px;top:422px;width:60px">10</div>
<div class="t bl" style="left:926px;top:422px;width:60px">44</div>
<div class="t yr" style="left:16px;top:439px;width:100px">2022</div>
<div class="t cb" style="left:116px;top:439px;width:55px">38</div>
<div class="t cn" style="left:171px;top:439px;width:55px">10</div>
<div class="t cn" style="left:226px;top:439px;width:55px">28</div>
<div class="t cb" style="left:281px;top:439px;width:55px">37</div>
<div class="t cn" style="left:336px;top:439px;width:55px">11</div>
<div class="t cn" style="left:391px;top:439px;width:55px">26</div>
<div class="t rb" style="left:446px;top:439px;width:60px">50,15</div>
<div class="t rn" style="left:506px;top:439px;width:60px">7,2</div>
<div class="t rn" style="left:566px;top:439px;width:60px">42,95</div>
<div class="t bl" style="left:626px;top:439px;width:60px">48</div>
<div class="t bl" style="left:686px;top:439px;width:60px">6</div>
<div class="t bl" style="left:746px;top:439px;width:60px">39</div>
<div class="t bl" style="left:806px;top:439px;width:60px">52</div>
<div class="t bl" style="left:866px;top:439px;width:60px">10</div>
<div class="t bl" style="left:926px;top:439px;width:60px">45</div>
<div class="t yr" style="left:16px;top:456px;width:100px">2023</div>
<div class="t cb" style="left:116px;top:456px;width:55px">8</div>
<div class="t cn" style="left:171px;top:456px;width:55px">2</div>
<div class="t cn" style="left:226px;top:456px;width:55px">6</div>
<div class="t cb" style="left:281px;top:456px;width:55px">2</div>
<div class="t cn" style="left:336px;top:456px;width:55px">0</div>
<div class="t cn" style="left:391px;top:456px;width:55px">2</div>
<div class="t rb" style="left:446px;top:456px;width:60px">52,96</div>
<div class="t rn" style="left:506px;top:456px;width:60px">8,21</div>
<div class="t rn" style="left:566px;top:456px;width:60px">44,75</div>
<div class="t bl" style="left:626px;top:456px;width:60px">50</div>
<div class="t bl" style="left:686px;top:456px;width:60px">8</div>
<div class="t bl" style="left:746px;top:456px;width:60px">42</div>
<div class="t bl" style="left:806px;top:456px;width:60px">56</div>
<div class="t bl" style="left:866px;top:456px;width:60px">10</div>
<div class="t bl" style="left:926px;top:456px;width:60px">46</div>
<div class="tri" style="left:110px;top:151px"></div>
<div class="tri" style="left:110px;top:457px"></div>

<!-- chart -->
<svg class="chart" width="1007" height="722" viewBox="0 0 1007 722"><rect x="73" y="655" width="795" height="2" fill="#dcdcdc"/>
<rect x="73" y="633" width="795" height="2" fill="#dcdcdc"/>
<rect x="73" y="610" width="795" height="2" fill="#dcdcdc"/>
<rect x="73" y="587" width="795" height="2" fill="#dcdcdc"/>
<rect x="73" y="564" width="795" height="2" fill="#dcdcdc"/>
<rect x="73" y="542" width="795" height="2" fill="#dcdcdc"/>
<rect x="73" y="519" width="795" height="2" fill="#dcdcdc"/>
<rect x="66" y="678.5" width="5" height="1" fill="#a0a0a0"/>
<rect x="68" y="672.8" width="3" height="1" fill="#b8b8b8"/>
<rect x="68" y="667.1" width="3" height="1" fill="#b8b8b8"/>
<rect x="68" y="661.5" width="3" height="1" fill="#b8b8b8"/>
<rect x="66" y="655.8" width="5" height="1" fill="#a0a0a0"/>
<rect x="68" y="650.1" width="3" height="1" fill="#b8b8b8"/>
<rect x="68" y="644.4" width="3" height="1" fill="#b8b8b8"/>
<rect x="68" y="638.8" width="3" height="1" fill="#b8b8b8"/>
<rect x="66" y="633.1" width="5" height="1" fill="#a0a0a0"/>
<rect x="68" y="627.4" width="3" height="1" fill="#b8b8b8"/>
<rect x="68" y="621.7" width="3" height="1" fill="#b8b8b8"/>
<rect x="68" y="616.0" width="3" height="1" fill="#b8b8b8"/>
<rect x="66" y="610.4" width="5" height="1" fill="#a0a0a0"/>
<rect x="68" y="604.7" width="3" height="1" fill="#b8b8b8"/>
<rect x="68" y="599.0" width="3" height="1" fill="#b8b8b8"/>
<rect x="68" y="593.3" width="3" height="1" fill="#b8b8b8"/>
<rect x="66" y="587.7" width="5" height="1" fill="#a0a0a0"/>
<rect x="68" y="582.0" width="3" height="1" fill="#b8b8b8"/>
<rect x="68" y="576.3" width="3" height="1" fill="#b8b8b8"/>
<rect x="68" y="570.6" width="3" height="1" fill="#b8b8b8"/>
<rect x="66" y="565.0" width="5" height="1" fill="#a0a0a0"/>
<rect x="68" y="559.3" width="3" height="1" fill="#b8b8b8"/>
<rect x="68" y="553.6" width="3" height="1" fill="#b8b8b8"/>
<rect x="68" y="547.9" width="3" height="1" fill="#b8b8b8"/>
<rect x="66" y="542.2" width="5" height="1" fill="#a0a0a0"/>
<rect x="68" y="536.6" width="3" height="1" fill="#b8b8b8"/>
<rect x="68" y="530.9" width="3" height="1" fill="#b8b8b8"/>
<rect x="68" y="525.2" width="3" height="1" fill="#b8b8b8"/>
<rect x="66" y="519.5" width="5" height="1" fill="#a0a0a0"/>
<text x="65" y="684.0" text-anchor="end" class="ax">0</text>
<text x="65" y="661.3" text-anchor="end" class="ax">10</text>
<text x="65" y="638.6" text-anchor="end" class="ax">20</text>
<text x="65" y="615.9" text-anchor="end" class="ax">30</text>
<text x="65" y="593.2" text-anchor="end" class="ax">40</text>
<text x="65" y="570.5" text-anchor="end" class="ax">50</text>
<text x="65" y="547.7" text-anchor="end" class="ax">60</text>
<text x="65" y="525.0" text-anchor="end" class="ax">70</text>
<defs><clipPath id="pc"><rect x="73" y="510" width="795" height="169"/></clipPath></defs><g clip-path="url(#pc)">
<rect x="87.5" y="676.7" width="29" height="2.3" fill="#0018cc" stroke="#000" stroke-width="1"/>
<rect x="128.5" y="676.7" width="29" height="2.3" fill="#0018cc" stroke="#000" stroke-width="1"/>
<rect x="169.5" y="602.6" width="29" height="52.5" fill="#e00000" stroke="#000" stroke-width="1"/>
<rect x="169.5" y="655.1" width="29" height="23.9" fill="#0018cc" stroke="#000" stroke-width="1"/>
<rect x="210.5" y="574.4" width="29" height="80.4" fill="#e00000" stroke="#000" stroke-width="1"/>
<rect x="210.5" y="654.7" width="29" height="24.3" fill="#0018cc" stroke="#000" stroke-width="1"/>
<rect x="251.5" y="556.7" width="29" height="98.2" fill="#e00000" stroke="#000" stroke-width="1"/>
<rect x="251.5" y="655.0" width="29" height="24.0" fill="#0018cc" stroke="#000" stroke-width="1"/>
<rect x="292.5" y="553.9" width="29" height="95.7" fill="#e00000" stroke="#000" stroke-width="1"/>
<rect x="292.5" y="649.6" width="29" height="29.4" fill="#0018cc" stroke="#000" stroke-width="1"/>
<rect x="333.5" y="557.3" width="29" height="96.4" fill="#e00000" stroke="#000" stroke-width="1"/>
<rect x="333.5" y="653.7" width="29" height="25.3" fill="#0018cc" stroke="#000" stroke-width="1"/>
<rect x="374.5" y="555.8" width="29" height="94.3" fill="#e00000" stroke="#000" stroke-width="1"/>
<rect x="374.5" y="650.0" width="29" height="29.0" fill="#0018cc" stroke="#000" stroke-width="1"/>
<rect x="415.5" y="557.5" width="29" height="97.9" fill="#e00000" stroke="#000" stroke-width="1"/>
<rect x="415.5" y="655.4" width="29" height="23.6" fill="#0018cc" stroke="#000" stroke-width="1"/>
<rect x="456.5" y="559.2" width="29" height="95.9" fill="#e00000" stroke="#000" stroke-width="1"/>
<rect x="456.5" y="655.0" width="29" height="24.0" fill="#0018cc" stroke="#000" stroke-width="1"/>
<rect x="497.5" y="557.5" width="29" height="97.8" fill="#e00000" stroke="#000" stroke-width="1"/>
<rect x="497.5" y="655.3" width="29" height="23.7" fill="#0018cc" stroke="#000" stroke-width="1"/>
<rect x="538.5" y="561.6" width="29" height="95.7" fill="#e00000" stroke="#000" stroke-width="1"/>
<rect x="538.5" y="657.3" width="29" height="21.7" fill="#0018cc" stroke="#000" stroke-width="1"/>
<rect x="579.5" y="559.7" width="29" height="105.7" fill="#e00000" stroke="#000" stroke-width="1"/>
<rect x="579.5" y="665.5" width="29" height="13.5" fill="#0018cc" stroke="#000" stroke-width="1"/>
<rect x="620.5" y="560.7" width="29" height="103.0" fill="#e00000" stroke="#000" stroke-width="1"/>
<rect x="620.5" y="663.7" width="29" height="15.3" fill="#0018cc" stroke="#000" stroke-width="1"/>
<rect x="661.5" y="558.2" width="29" height="103.0" fill="#e00000" stroke="#000" stroke-width="1"/>
<rect x="661.5" y="661.2" width="29" height="17.8" fill="#0018cc" stroke="#000" stroke-width="1"/>
<rect x="702.5" y="566.1" width="29" height="95.6" fill="#e00000" stroke="#000" stroke-width="1"/>
<rect x="702.5" y="661.7" width="29" height="17.3" fill="#0018cc" stroke="#000" stroke-width="1"/>
<rect x="743.5" y="565.9" width="29" height="94.5" fill="#e00000" stroke="#000" stroke-width="1"/>
<rect x="743.5" y="660.4" width="29" height="18.6" fill="#0018cc" stroke="#000" stroke-width="1"/>
<rect x="784.5" y="565.1" width="29" height="97.5" fill="#e00000" stroke="#000" stroke-width="1"/>
<rect x="784.5" y="662.6" width="29" height="16.4" fill="#0018cc" stroke="#000" stroke-width="1"/>
<rect x="825.5" y="558.7" width="29" height="101.6" fill="#e00000" stroke="#000" stroke-width="1"/>
<rect x="825.5" y="660.4" width="29" height="18.6" fill="#0018cc" stroke="#000" stroke-width="1"/>
<polyline points="102.50,676.7 143.50,679.0 184.50,520.0 225.50,604.1 266.50,610.9 307.50,608.6 348.50,626.8 389.50,644.9 430.50,601.8 471.50,642.7 512.50,606.3 553.50,633.6 594.50,629.0 635.50,624.5 676.50,642.7 717.50,654.0 758.50,613.1 799.50,592.7 840.50,660.8" fill="none" stroke="#2d6b1f" stroke-width="1"/>
<polyline points="102.50,679.0 143.50,679.0 184.50,613.1 225.50,622.2 266.50,615.4 307.50,613.1 348.50,624.5 389.50,644.9 430.50,601.8 471.50,642.7 512.50,606.3 553.50,624.5 594.50,640.4 635.50,622.2 676.50,642.7 717.50,638.1 758.50,620.0 799.50,595.0 840.50,674.5" fill="none" stroke="#ffff00" stroke-width="1"/>
<rect x="99.75" y="674.2" width="5" height="5" rx="0.5" fill="#1a5a10" stroke="#0a2a08" stroke-width="1"/>
<rect x="140.75" y="676.5" width="5" height="5" rx="0.5" fill="#1a5a10" stroke="#0a2a08" stroke-width="1"/>
<rect x="181.75" y="517.5" width="5" height="5" rx="0.5" fill="#1a5a10" stroke="#0a2a08" stroke-width="1"/>
<rect x="222.75" y="601.6" width="5" height="5" rx="0.5" fill="#1a5a10" stroke="#0a2a08" stroke-width="1"/>
<rect x="263.75" y="608.4" width="5" height="5" rx="0.5" fill="#1a5a10" stroke="#0a2a08" stroke-width="1"/>
<rect x="304.75" y="606.1" width="5" height="5" rx="0.5" fill="#1a5a10" stroke="#0a2a08" stroke-width="1"/>
<rect x="345.75" y="624.3" width="5" height="5" rx="0.5" fill="#1a5a10" stroke="#0a2a08" stroke-width="1"/>
<rect x="386.75" y="642.4" width="5" height="5" rx="0.5" fill="#1a5a10" stroke="#0a2a08" stroke-width="1"/>
<rect x="427.75" y="599.3" width="5" height="5" rx="0.5" fill="#1a5a10" stroke="#0a2a08" stroke-width="1"/>
<rect x="468.75" y="640.2" width="5" height="5" rx="0.5" fill="#1a5a10" stroke="#0a2a08" stroke-width="1"/>
<rect x="509.75" y="603.8" width="5" height="5" rx="0.5" fill="#1a5a10" stroke="#0a2a08" stroke-width="1"/>
<rect x="550.75" y="631.1" width="5" height="5" rx="0.5" fill="#1a5a10" stroke="#0a2a08" stroke-width="1"/>
<rect x="591.75" y="626.5" width="5" height="5" rx="0.5" fill="#1a5a10" stroke="#0a2a08" stroke-width="1"/>
<rect x="632.75" y="622.0" width="5" height="5" rx="0.5" fill="#1a5a10" stroke="#0a2a08" stroke-width="1"/>
<rect x="673.75" y="640.2" width="5" height="5" rx="0.5" fill="#1a5a10" stroke="#0a2a08" stroke-width="1"/>
<rect x="714.75" y="651.5" width="5" height="5" rx="0.5" fill="#1a5a10" stroke="#0a2a08" stroke-width="1"/>
<rect x="755.75" y="610.6" width="5" height="5" rx="0.5" fill="#1a5a10" stroke="#0a2a08" stroke-width="1"/>
<rect x="796.75" y="590.2" width="5" height="5" rx="0.5" fill="#1a5a10" stroke="#0a2a08" stroke-width="1"/>
<rect x="837.75" y="658.3" width="5" height="5" rx="0.5" fill="#1a5a10" stroke="#0a2a08" stroke-width="1"/>
<rect x="99.75" y="676.5" width="5" height="5" rx="0.5" fill="#ffff00" stroke="#3a3a00" stroke-width="1"/>
<rect x="140.75" y="676.5" width="5" height="5" rx="0.5" fill="#ffff00" stroke="#3a3a00" stroke-width="1"/>
<rect x="181.75" y="610.6" width="5" height="5" rx="0.5" fill="#ffff00" stroke="#3a3a00" stroke-width="1"/>
<rect x="222.75" y="619.7" width="5" height="5" rx="0.5" fill="#ffff00" stroke="#3a3a00" stroke-width="1"/>
<rect x="263.75" y="612.9" width="5" height="5" rx="0.5" fill="#ffff00" stroke="#3a3a00" stroke-width="1"/>
<rect x="304.75" y="610.6" width="5" height="5" rx="0.5" fill="#ffff00" stroke="#3a3a00" stroke-width="1"/>
<rect x="345.75" y="622.0" width="5" height="5" rx="0.5" fill="#ffff00" stroke="#3a3a00" stroke-width="1"/>
<rect x="386.75" y="642.4" width="5" height="5" rx="0.5" fill="#ffff00" stroke="#3a3a00" stroke-width="1"/>
<rect x="427.75" y="599.3" width="5" height="5" rx="0.5" fill="#ffff00" stroke="#3a3a00" stroke-width="1"/>
<rect x="468.75" y="640.2" width="5" height="5" rx="0.5" fill="#ffff00" stroke="#3a3a00" stroke-width="1"/>
<rect x="509.75" y="603.8" width="5" height="5" rx="0.5" fill="#ffff00" stroke="#3a3a00" stroke-width="1"/>
<rect x="550.75" y="622.0" width="5" height="5" rx="0.5" fill="#ffff00" stroke="#3a3a00" stroke-width="1"/>
<rect x="591.75" y="637.9" width="5" height="5" rx="0.5" fill="#ffff00" stroke="#3a3a00" stroke-width="1"/>
<rect x="632.75" y="619.7" width="5" height="5" rx="0.5" fill="#ffff00" stroke="#3a3a00" stroke-width="1"/>
<rect x="673.75" y="640.2" width="5" height="5" rx="0.5" fill="#ffff00" stroke="#3a3a00" stroke-width="1"/>
<rect x="714.75" y="635.6" width="5" height="5" rx="0.5" fill="#ffff00" stroke="#3a3a00" stroke-width="1"/>
<rect x="755.75" y="617.5" width="5" height="5" rx="0.5" fill="#ffff00" stroke="#3a3a00" stroke-width="1"/>
<rect x="796.75" y="592.5" width="5" height="5" rx="0.5" fill="#ffff00" stroke="#3a3a00" stroke-width="1"/>
<rect x="837.75" y="672.0" width="5" height="5" rx="0.5" fill="#ffff00" stroke="#3a3a00" stroke-width="1"/>
</g>
<rect x="71" y="516" width="799" height="2" fill="#707070"/>
<rect x="868" y="516" width="2" height="165" fill="#707070"/>
<rect x="71" y="517" width="2" height="164" fill="#000"/>
<rect x="71" y="679" width="799" height="2" fill="#000"/>
<rect x="897" y="537" width="62" height="57" fill="#c8c8c8" opacity="0.6"/>
<rect x="894.5" y="534.5" width="62" height="57" fill="#fff" stroke="#606060" stroke-width="1.5" rx="1"/>
<rect x="901.5" y="540.5" width="7" height="7" fill="#0018cc" stroke="#000" stroke-width="1"/>
<text x="916" y="546.5" class="lg">Muškarci</text>
<rect x="901.5" y="553.5" width="7" height="7" fill="#e00000" stroke="#000" stroke-width="1"/>
<text x="916" y="559.5" class="lg">Žene</text>
<rect x="900" y="569.5" width="10" height="1" fill="#2d6b1f"/>
<rect x="902.5" y="567.5" width="5" height="5" rx="0.5" fill="#1a5a10" stroke="#202020" stroke-width="1"/>
<text x="916" y="572.5" class="lg">Uselili</text>
<rect x="900" y="582.5" width="10" height="1" fill="#ffff00"/>
<rect x="902.5" y="580.5" width="5" height="5" rx="0.5" fill="#ffff00" stroke="#202020" stroke-width="1"/>
<text x="916" y="585.5" class="lg">Iselili</text></svg>
</body></html>
